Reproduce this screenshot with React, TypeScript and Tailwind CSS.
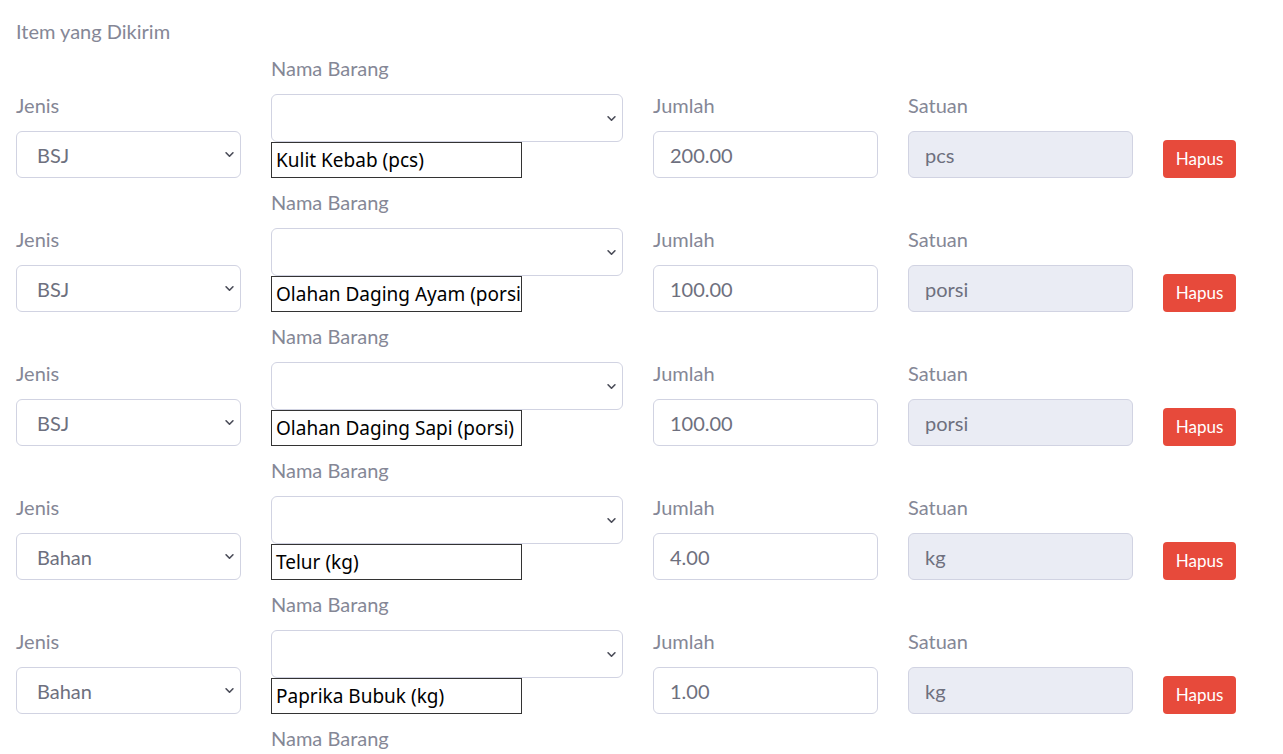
import React from "react";

interface ItemRow {
  id: number;
  jenis: string;
  nama: string;
  jumlah: string;
  satuan: string;
}

const items: ItemRow[] = [
  { id: 1, jenis: "BSJ", nama: "Kulit Kebab (pcs)", jumlah: "200.00", satuan: "pcs" },
  { id: 2, jenis: "BSJ", nama: "Olahan Daging Ayam (porsi)", jumlah: "100.00", satuan: "porsi" },
  { id: 3, jenis: "BSJ", nama: "Olahan Daging Sapi (porsi)", jumlah: "100.00", satuan: "porsi" },
  { id: 4, jenis: "Bahan", nama: "Telur (kg)", jumlah: "4.00", satuan: "kg" },
  { id: 5, jenis: "Bahan", nama: "Paprika Bubuk (kg)", jumlah: "1.00", satuan: "kg" },
];

const font = { fontFamily: "Lato, 'Noto Sans', sans-serif" };

function Chevron() {
  return (
    <svg width="11" height="11" viewBox="0 0 16 16" className="text-[#4b4d59]">
      <path d="M3 5.5l5 5 5-5" fill="none" stroke="currentColor" strokeWidth="2.4" strokeLinecap="round" strokeLinejoin="round" />
    </svg>
  );
}

function Label({ children }: { children: React.ReactNode }) {
  return <div className="text-[20px] leading-[27px] mb-3 text-[#858796]">{children}</div>;
}

function Row({ item }: { item: ItemRow }) {
  return (
    <div className="flex items-end mb-[11px]">
      <div className="w-[225px]">
        <Label>Jenis</Label>
        <div className="h-[47px] border border-[#d1d3e2] rounded-[6px] bg-white flex items-center justify-between pl-[20px] pr-[5px] text-[20px] text-[#6e707e]">
          <span>{item.jenis}</span>
          <Chevron />
        </div>
      </div>
      <div className="w-[352px] ml-[30px]">
        <Label>Nama Barang</Label>
        <div className="h-[48px] border border-[#d1d3e2] rounded-[6px] bg-white flex items-center justify-end pr-[5px]">
          <Chevron />
        </div>
        <div
          className="h-[36px] w-[251px] border border-[#333] bg-white flex items-center pl-[4px] text-[19px] text-black overflow-hidden whitespace-nowrap"
          style={{ fontFamily: "'Noto Sans', sans-serif" }}
        >
          {item.nama}
        </div>
      </div>
      <div className="w-[225px] ml-[30px]">
        <Label>Jumlah</Label>
        <div className="h-[47px] border border-[#d1d3e2] rounded-[6px] bg-white flex items-center pl-[16px] text-[20px] text-[#6e707e]">
          {item.jumlah}
        </div>
      </div>
      <div className="w-[225px] ml-[30px]">
        <Label>Satuan</Label>
        <div className="h-[47px] border border-[#d1d3e2] rounded-[6px] bg-[#eaecf4] flex items-center pl-[16px] text-[20px] text-[#6e707e]">
          {item.satuan}
        </div>
      </div>
      <button className="ml-[30px] w-[73px] h-[38px] rounded-[4px] bg-[#e74a3b] text-white text-[17px]">
        Hapus
      </button>
    </div>
  );
}

export default function App() {
  return (
    <div className="w-[1283px] h-[754px] overflow-hidden bg-white pl-[16px] pt-[18px]" style={font}>
      <div className="text-[20px] leading-[27px] text-[#858796] mb-[10px]">Item yang Dikirim</div>
      {items.map((item) => (
        <Row key={item.id} item={item} />
      ))}
      <div className="ml-[255px]">
        <Label>Nama Barang</Label>
      </div>
    </div>
  );
}
